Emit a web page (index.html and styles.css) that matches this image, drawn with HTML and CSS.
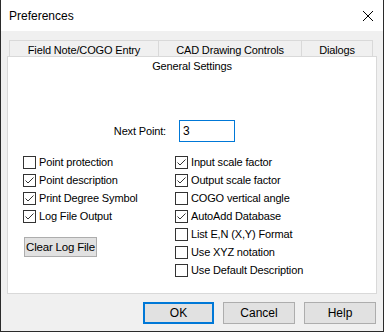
FILE: index.html
```html
<!DOCTYPE html>
<html lang="en">
<head>
    <meta charset="UTF-8">
    <title>Preferences</title>
    <link rel="stylesheet" href="styles.css">
</head>
<body>
    <div class="window">
        <div class="titlebar">
            <span class="title">Preferences</span>
            <svg class="close" width="12" height="12" viewBox="0 0 12 12">
                <path d="M1 1 L11 11 M11 1 L1 11" stroke="#000" stroke-width="1" fill="none"/>
            </svg>
        </div>
        <div class="dialog-body">
            <div class="tabs">
                <div class="tab tab-1">Field Note/COGO Entry</div>
                <div class="tab tab-2">CAD Drawing Controls</div>
                <div class="tab tab-3">Dialogs</div>
            </div>
            <div class="panel">
                <div class="active-tab">General Settings</div>
                <div class="next-point">
                    <label for="nextPoint">Next Point:</label>
                    <div class="text-input" id="nextPoint">3</div>
                </div>
                <div class="columns">
                    <div class="col col-left">
                        <div class="check"><span class="box"></span>Point protection</div>
                        <div class="check"><span class="box checked"></span>Point description</div>
                        <div class="check"><span class="box checked"></span>Print Degree Symbol</div>
                        <div class="check"><span class="box checked"></span>Log File Output</div>
                        <button class="btn btn-small">Clear Log File</button>
                    </div>
                    <div class="col">
                        <div class="check"><span class="box checked"></span>Input scale factor</div>
                        <div class="check"><span class="box checked"></span>Output scale factor</div>
                        <div class="check"><span class="box"></span>COGO vertical angle</div>
                        <div class="check"><span class="box checked"></span>AutoAdd Database</div>
                        <div class="check"><span class="box"></span>List E,N (X,Y) Format</div>
                        <div class="check"><span class="box"></span>Use XYZ notation</div>
                        <div class="check"><span class="box"></span>Use Default Description</div>
                    </div>
                </div>
            </div>
            <div class="footer">
                <button class="btn btn-default">OK</button>
                <button class="btn">Cancel</button>
                <button class="btn">Help</button>
            </div>
        </div>
    </div>
</body>
</html>
```

FILE: styles.css
```css
* {
    box-sizing: border-box;
}
body {
    margin: 0;
    font-family: "Liberation Sans", Arial, sans-serif;
    font-size: 11px;
    letter-spacing: -0.15px;
    color: #000;
    background: #fff;
}
.window {
    width: 384px;
    height: 332px;
    border: 1px solid #2b2b2b;
    border-top: none;
    display: flex;
    flex-direction: column;
}
.titlebar {
    height: 31px;
    background: #fff;
    display: flex;
    align-items: center;
    justify-content: space-between;
    padding: 0 9px 0 8px;
}
.title {
    font-size: 12px;
    letter-spacing: 0;
    padding-top: 1px;
}
.close {
    margin-top: 1px;
}
.dialog-body {
    flex: 1;
    background: #f0f0f0;
    padding: 9px 6px 0 6px;
}
.tabs {
    display: flex;
    margin-left: 2px;
    height: 16px;
}
.tab {
    border: 1px solid #d9d9d9;
    border-bottom: none;
    border-right: none;
    text-align: center;
    padding-top: 3px;
    line-height: 13px;
}
.tab-1 { width: 149px; }
.tab-2 { width: 143px; }
.tab-3 { width: 72px; border-right: 1px solid #d9d9d9; }
.panel {
    height: 238px;
    background: #fff;
    border: 1px solid #d9d9d9;
}
.active-tab {
    text-align: center;
    line-height: 13px;
    padding-top: 3px;
}
.next-point {
    display: flex;
    align-items: center;
    margin-top: 47px;
}
.next-point label {
    width: 158px;
    text-align: right;
}
.text-input {
    margin-left: 13px;
    width: 56px;
    height: 22px;
    border: 1px solid #0078d7;
    padding: 3px 0 0 3px;
    font-size: 12px;
}
.columns {
    display: flex;
    margin-top: 11px;
    padding-left: 15px;
}
.col-left {
    width: 152px;
}
.check {
    display: flex;
    align-items: center;
    height: 18px;
    white-space: nowrap;
}
.box {
    width: 13px;
    height: 13px;
    border: 1px solid #333;
    background: #fff;
    margin-right: 3px;
    flex-shrink: 0;
}
.box.checked {
    background: #fff url("data:image/svg+xml,%3Csvg xmlns='http://www.w3.org/2000/svg' width='11' height='11'%3E%3Cpolyline points='1.5,5.5 4,8 9.5,2.5' fill='none' stroke='%23333' stroke-width='1'/%3E%3C/svg%3E") no-repeat center;
}
.btn {
    font-family: inherit;
    font-size: 12px;
    letter-spacing: 0;
    background: #e1e1e1;
    border: 1px solid #adadad;
    width: 72px;
    height: 22px;
    padding: 0;
    color: #000;
    white-space: nowrap;
}
.btn-small {
    width: 73px;
    height: 20px;
    margin-top: 12px;
    margin-left: 1px;
    font-size: 11.5px;
    letter-spacing: -0.2px;
}
.btn-default {
    border: 2px solid #0078d7;
    width: 71px;
}
.footer {
    display: flex;
    justify-content: flex-end;
    gap: 9px;
    margin-top: 8px;
    padding-right: 1px;
}
```
